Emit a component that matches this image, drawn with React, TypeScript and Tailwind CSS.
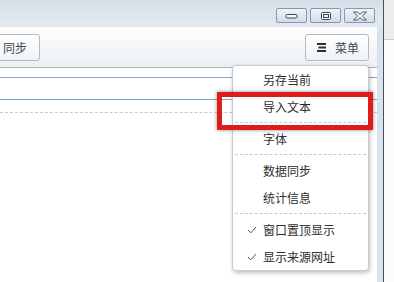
import React from "react";

const font = { fontFamily: '"Noto Sans CJK SC", "Noto Sans", sans-serif' };

function WinBtn({ children }: { children: React.ReactNode }) {
  return (
    <div className="w-[31px] h-[15px] rounded-[2px] border border-[#8797ad] bg-gradient-to-b from-[#f0f4f8] to-[#d3dce7] flex items-center justify-center">
      {children}
    </div>
  );
}

function Sep() {
  return (
    <div className="h-[5px] flex items-center px-[2px]">
      <div className="w-full border-t border-dashed border-[#c9c9c9]" />
    </div>
  );
}

function Item({ label, checked }: { label: string; checked?: boolean }) {
  return (
    <div className="h-[27px] flex items-center text-[12px] text-[#2e2e2e]">
      <div className="w-[30px] flex justify-end pr-[6px]">
        {checked && (
          <svg width="10" height="8" viewBox="0 0 10 8">
            <path d="M1 4 L3.8 6.8 L9 1" fill="none" stroke="#555" strokeWidth="1" />
          </svg>
        )}
      </div>
      <span>{label}</span>
    </div>
  );
}

export default function App() {
  return (
    <div className="relative w-[394px] h-[282px] overflow-hidden flex bg-white" style={font}>
      {/* window */}
      <div className="w-[384px] h-full flex flex-col bg-[#d9e3ee] border-r border-[#4a4f55]">
        {/* title bar */}
        <div className="h-[27px] shrink-0 bg-gradient-to-b from-[#d6dfe9] to-[#e3e9f0] flex items-start justify-end pt-[8px] pr-[8px] gap-[3px]">
          <WinBtn>
            <svg width="13" height="6" viewBox="0 0 13 6">
              <rect x="1" y="1.5" width="11" height="3.5" rx="1.2" fill="#f4f6f8" stroke="#3d4650" strokeWidth="1" />
            </svg>
          </WinBtn>
          <WinBtn>
            <svg width="12" height="10" viewBox="0 0 12 10">
              <rect x="1.5" y="1.5" width="9" height="7" rx="1" fill="#f4f6f8" stroke="#3d4650" strokeWidth="1" />
              <rect x="3.5" y="3.5" width="5" height="3" fill="none" stroke="#3d4650" strokeWidth="1" />
            </svg>
          </WinBtn>
          <WinBtn>
            <svg width="16" height="10" viewBox="0 0 16 10">
              <path
                d="M1.5 1 H5 L8 3.3 L11 1 H14.5 L10.3 5 L14.5 9 H11 L8 6.7 L5 9 H1.5 L5.7 5 Z"
                fill="#f4f6f8"
                stroke="#3d4650"
                strokeWidth="0.9"
                strokeLinejoin="round"
              />
            </svg>
          </WinBtn>
        </div>
        {/* client */}
        <div className="flex-1 flex pr-[6px]">
          <div className="flex-1 flex flex-col bg-white">
            {/* toolbar */}
            <div className="h-[41px] shrink-0 bg-gradient-to-b from-[#fdfdfe] to-[#edf0f3] border-b border-[#aeb3b9] flex items-start justify-between pt-[7px] pr-[8px]">
              <div className="ml-[-10px] h-[27px] px-[12px] rounded-[3px] border border-[#b4bbc3] bg-gradient-to-b from-[#ffffff] to-[#f0f2f4] flex items-center text-[12px] text-[#3d4852]">
                同步
              </div>
              <div className="w-[64px] h-[27px] rounded-[3px] border border-[#b4bbc3] bg-gradient-to-b from-[#ffffff] to-[#f0f2f4] flex items-center pl-[11px] gap-[9px] text-[12px] text-[#3d4852]">
                <svg width="9" height="9" viewBox="0 0 9 9">
                  <rect x="0" y="0" width="9" height="2" fill="#26313b" />
                  <rect x="1.5" y="3.5" width="7.5" height="2" fill="#26313b" />
                  <rect x="0" y="7" width="9" height="2" fill="#26313b" />
                </svg>
                <span>菜单</span>
              </div>
            </div>
            {/* content */}
            <div className="pt-[9px]">
              <div className="h-[23px] border-t border-b border-[#7ea6d2]" />
              <div className="mt-[12px] border-t border-dashed border-[#c9c9c9]" />
            </div>
          </div>
        </div>
      </div>
      {/* outside */}
      <div className="flex-1 flex flex-col">
        <div className="h-[40px] bg-[#ebedef] border-b border-[#c9ccd0]" />
        <div className="flex-1 bg-[#fbfbfb]" />
      </div>

      {/* dropdown menu */}
      <div className="absolute left-[232px] top-[65px] w-[137px] h-[206px] bg-white border border-[#c6c9cd] rounded-[4px] shadow-[1px_2px_4px_rgba(0,0,0,0.25)] flex flex-col">
        <Item label="另存当前" />
        <Item label="导入文本" />
        <Sep />
        <Item label="字体" />
        <Sep />
        <Item label="数据同步" />
        <Item label="统计信息" />
        <Sep />
        <Item label="窗口置顶显示" checked />
        <Item label="显示来源网址" checked />
      </div>

      {/* red highlight */}
      <div className="absolute left-[217px] top-[92px] w-[156px] h-[38px] border-[5px] border-[#e01b1b] shadow-[0_0_4px_rgba(0,0,0,0.45)]" />
    </div>
  );
}
